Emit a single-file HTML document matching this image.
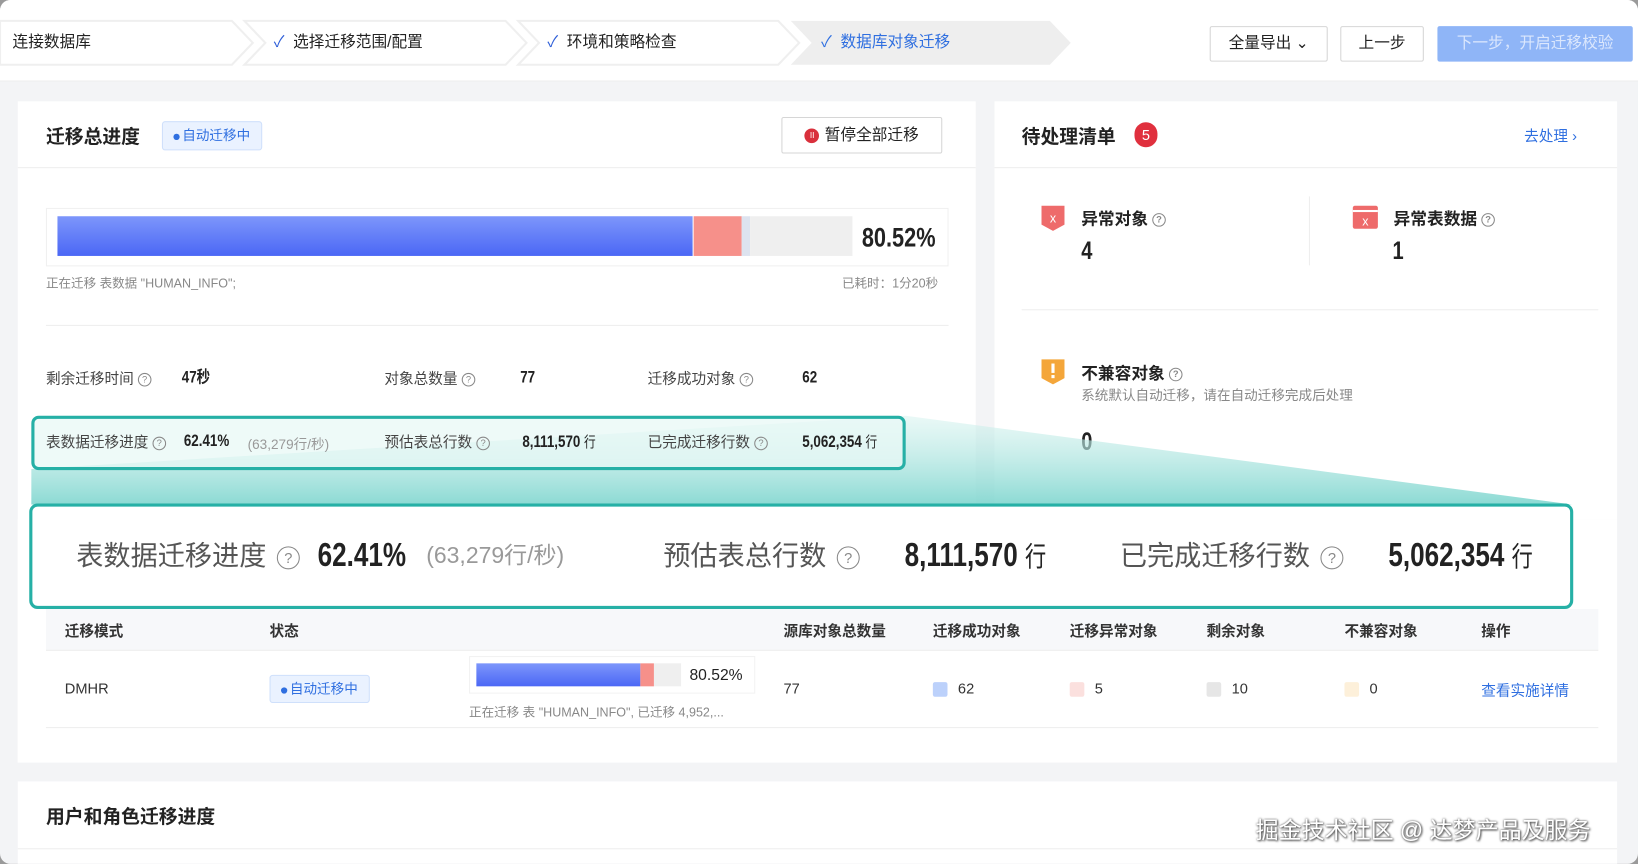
<!DOCTYPE html>
<html><head><meta charset="utf-8"><style>
*{margin:0;padding:0;box-sizing:border-box}
body{width:1638px;height:864px;overflow:hidden;background:#9a9a9a;font-family:"Liberation Sans","Noto Sans CJK SC",sans-serif;color:#222}
#w{position:absolute;left:0;top:0;width:1568px;height:827px;transform:scale(1.04464);transform-origin:0 0;background:#f3f4f6;border-radius:10px;overflow:hidden}
.a{position:absolute}
.top{left:0;top:0;width:1568px;height:78px;background:#fff;border-bottom:1px solid #eee}
.step{top:20px;height:42px;font-size:15px;line-height:42px;color:#222}
.card{background:#fff}
.btn{border:1px solid #d6d6d6;background:#fff;font-size:15px;text-align:center;line-height:31px;border-radius:2px}
.q{display:inline-block;width:13px;height:13px;border:1px solid #888;border-radius:50%;font-size:9px;line-height:11px;text-align:center;color:#888;vertical-align:middle;margin-left:4px}
.lbl{font-size:14px;color:#444;line-height:20px}
.num{font-weight:bold;font-size:16px;color:#222;line-height:20px;transform:scaleX(.8);transform-origin:0 50%;white-space:nowrap}
.tag{background:#eaf2ff;border:1px solid #cfe0fb;color:#2f6fe0;font-size:13px;border-radius:3px;text-align:center}
.dot{display:inline-block;width:6px;height:6px;border-radius:50%;background:#2f6fe0;vertical-align:middle;margin-right:2px}
.th{font-size:14px;font-weight:bold;color:#333;top:594px}
.td{font-size:14px;color:#333;top:651px}
.sq{display:inline-block;width:14px;height:14px;border-radius:2px;vertical-align:middle;margin-right:10px}
.big{font-size:26px;color:#555;line-height:36px;top:514px}
.bq{width:22px;height:22px;font-size:14px;line-height:20px;margin-left:10px}
.bn{font-size:32px;line-height:36px;top:513px;transform:scaleX(.78)}
</style></head><body><div id="w">
<div class="a top"></div>
<svg class="a" style="left:0;top:18px" width="1040" height="46">
<g fill="#fff" stroke="#efefef" stroke-width="2">
<polygon points="0,2 222,2 242,23 222,44 0,44"/>
<polygon points="234,2 484,2 504,23 484,44 234,44 254,23"/>
<polygon points="496,2 745,2 765,23 745,44 496,44 516,23"/>
</g>
<polygon points="757,2 1005,2 1025,23 1005,44 757,44 777,23" fill="#eeeeee"/>
</svg>
<div class="a step" style="left:12px">连接数据库</div>
<div class="a step" style="left:262px"><span style="color:#2f5fd8">✓</span>&nbsp; 选择迁移范围/配置</div>
<div class="a step" style="left:524px"><span style="color:#2f5fd8">✓</span>&nbsp; 环境和策略检查</div>
<div class="a step" style="left:786px;color:#2f6fe0"><span>✓</span>&nbsp; 数据库对象迁移</div>
<div class="a btn" style="left:1158px;top:25px;width:113px;height:34px">全量导出 ⌄</div>
<div class="a btn" style="left:1283px;top:25px;width:80px;height:34px">上一步</div>
<div class="a btn" style="left:1376px;top:25px;width:187px;height:34px;background:#8fb5f7;border-color:#8fb5f7;color:#dbe7fd">下一步，开启迁移校验</div>

<!-- left card -->
<div class="a card" style="left:17px;top:97px;width:917px;height:633px"></div>
<div class="a card" style="left:17px;top:497px;width:1531px;height:233px"></div>
<div class="a" style="left:17px;top:160px;width:917px;height:1px;background:#eee"></div>
<div class="a" style="left:44px;top:117px;font-size:18px;font-weight:bold">迁移总进度</div>
<div class="a tag" style="left:155px;top:116px;width:96px;height:28px;line-height:26px"><span class="dot"></span>自动迁移中</div>
<div class="a btn" style="left:748px;top:112px;width:154px;height:35px;display:flex;align-items:center;justify-content:center;gap:5px"><span style="display:inline-block;width:14px;height:14px;border-radius:50%;background:#d9303c;color:#fff;font-size:8px;line-height:14px">II</span>暂停全部迁移</div>
<div class="a" style="left:44px;top:199px;width:864px;height:56px;border:1px solid #f0f0f0"></div>
<div class="a" style="left:55px;top:207px;width:608px;height:38px;background:linear-gradient(#7d96fb,#4b67f5)"></div>
<div class="a" style="left:664px;top:207px;width:46px;height:38px;background:#f6908a"></div>
<div class="a" style="left:710px;top:207px;width:8px;height:38px;background:#dde3ef"></div>
<div class="a" style="left:718px;top:207px;width:98px;height:38px;background:#efefef"></div>
<div class="a num" style="left:825px;top:214px;font-size:26px;line-height:26px">80.52%</div>
<div class="a" style="left:44px;top:262px;font-size:12px;color:#888">正在迁移 表数据 "HUMAN_INFO";</div>
<div class="a" style="left:806px;top:262px;font-size:12px;color:#888">已耗时：1分20秒</div>
<div class="a" style="left:44px;top:311px;width:864px;height:1px;background:#eee"></div>
<div class="a lbl" style="left:44px;top:352px">剩余迁移时间<span class="q">?</span></div><div class="a num" style="left:174px;top:352px">47秒</div>
<div class="a lbl" style="left:368px;top:352px">对象总数量<span class="q">?</span></div><div class="a num" style="left:498px;top:352px">77</div>
<div class="a lbl" style="left:620px;top:352px">迁移成功对象<span class="q">?</span></div><div class="a num" style="left:768px;top:352px">62</div>

<!-- right card -->
<div class="a card" style="left:952px;top:97px;width:596px;height:400px"></div>
<div class="a" style="left:952px;top:160px;width:596px;height:1px;background:#eee"></div>
<div class="a" style="left:978px;top:117px;font-size:18px;font-weight:bold">待处理清单</div>
<div class="a" style="left:1086px;top:117px;width:22px;height:24px;border-radius:11px;background:#e0303e;color:#fff;font-size:14px;text-align:center;line-height:24px">5</div>
<div class="a" style="left:1459px;top:120px;font-size:14px;color:#2f6fe0">去处理 ›</div>
<svg class="a" style="left:996px;top:196px" width="26" height="26"><path d="M1 1h22v18l-11 6-11-6z" fill="#ee6b6b"/><text x="12" y="17" font-size="12" fill="#fff" text-anchor="middle" font-family="Liberation Sans">x</text></svg>
<div class="a" style="left:1035px;top:196px;font-size:16px;font-weight:bold">异常对象<span class="q">?</span></div>
<div class="a num" style="left:1035px;top:229px;font-size:24px;line-height:24px">4</div>
<div class="a" style="left:1253px;top:188px;width:1px;height:66px;background:#eee"></div>
<svg class="a" style="left:1294px;top:196px" width="26" height="26"><rect x="1" y="1" width="24" height="22" rx="2" fill="#ee6b6b"/><rect x="1" y="5" width="24" height="2" fill="#fff"/><text x="13" y="20" font-size="12" fill="#fff" text-anchor="middle" font-family="Liberation Sans">x</text></svg>
<div class="a" style="left:1334px;top:196px;font-size:16px;font-weight:bold">异常表数据<span class="q">?</span></div>
<div class="a num" style="left:1333px;top:229px;font-size:24px;line-height:24px">1</div>
<div class="a" style="left:978px;top:296px;width:552px;height:1px;background:#eee"></div>
<svg class="a" style="left:996px;top:343px" width="26" height="28"><path d="M1 1h22v18l-11 6-11-6z" fill="#f4a63a"/><rect x="10.5" y="5" width="3" height="9" fill="#fff"/><rect x="10.5" y="16" width="3" height="3" fill="#fff"/></svg>
<div class="a" style="left:1035px;top:344px;font-size:16px;font-weight:bold">不兼容对象<span class="q">?</span></div>
<div class="a" style="left:1035px;top:368px;font-size:13px;color:#888">系统默认自动迁移，请在自动迁移完成后处理</div>
<div class="a num" style="left:1035px;top:412px;font-size:24px;line-height:24px">0</div>

<!-- table -->
<div class="a" style="left:44px;top:583px;width:1486px;height:40px;background:#f7f8fa;border-bottom:1px solid #eee"></div>
<div class="a" style="left:44px;top:696px;width:1486px;height:1px;background:#eee"></div>
<div class="a th" style="left:62px">迁移模式</div><div class="a th" style="left:258px">状态</div><div class="a th" style="left:750px">源库对象总数量</div><div class="a th" style="left:893px">迁移成功对象</div><div class="a th" style="left:1024px">迁移异常对象</div><div class="a th" style="left:1155px">剩余对象</div><div class="a th" style="left:1287px">不兼容对象</div><div class="a th" style="left:1418px">操作</div>
<div class="a td" style="left:62px">DMHR</div>
<div class="a tag" style="left:258px;top:646px;width:96px;height:27px;line-height:25px"><span class="dot"></span>自动迁移中</div>
<div class="a" style="left:449px;top:628px;width:274px;height:36px;border:1px solid #f2f2f2"></div>
<div class="a" style="left:456px;top:635px;width:157px;height:22px;background:linear-gradient(#7d96fb,#4b67f5)"></div>
<div class="a" style="left:613px;top:635px;width:13px;height:22px;background:#f6908a"></div>
<div class="a" style="left:626px;top:635px;width:26px;height:22px;background:#efefef"></div>
<div class="a" style="left:660px;top:638px;font-size:15px">80.52%</div>
<div class="a" style="left:449px;top:673px;font-size:12px;color:#888">正在迁移 表 "HUMAN_INFO", 已迁移 4,952,...</div>
<div class="a td" style="left:750px">77</div>
<div class="a td" style="left:893px"><span class="sq" style="background:#bcd1fb"></span>62</div>
<div class="a td" style="left:1024px"><span class="sq" style="background:#fbe0de"></span>5</div>
<div class="a td" style="left:1155px"><span class="sq" style="background:#e6e6e6"></span>10</div>
<div class="a td" style="left:1287px"><span class="sq" style="background:#fdf0da"></span>0</div>
<div class="a td" style="left:1418px;color:#2f6fe0">查看实施详情</div>

<div class="a card" style="left:17px;top:748px;width:1531px;height:79px"></div>
<div class="a" style="left:44px;top:768px;font-size:18px;font-weight:bold">用户和角色迁移进度</div>
<div class="a" style="left:17px;top:812px;width:1531px;height:1px;background:#eee"></div>

<!-- overlay -->
<svg class="a" style="left:0;top:0" width="1568" height="827"><defs><linearGradient id="g" x1="0" y1="0" x2="0" y2="1"><stop offset="0" stop-color="#d4f2ee" stop-opacity=".5"/><stop offset="1" stop-color="#7fd6cf" stop-opacity=".9"/></linearGradient></defs>
<polygon points="30,449 867,398 1505,483 30,483" fill="url(#g)"/></svg>
<div class="a" style="left:30px;top:398px;width:837px;height:52px;border:3px solid #26b0a6;border-radius:7px;background:rgba(232,248,246,.75)"></div>
<div class="a lbl" style="left:44px;top:413px">表数据迁移进度<span class="q">?</span></div><div class="a num" style="left:176px;top:413px">62.41%</div><div class="a" style="left:237px;top:415px;font-size:13px;color:#999">(63,279行/秒)</div>
<div class="a lbl" style="left:368px;top:413px">预估表总行数<span class="q">?</span></div><div class="a num" style="left:500px;top:413px">8,111,570 <span style="font-weight:normal;font-size:14px">行</span></div>
<div class="a lbl" style="left:620px;top:413px">已完成迁移行数<span class="q">?</span></div><div class="a num" style="left:768px;top:413px">5,062,354 <span style="font-weight:normal;font-size:14px">行</span></div>
<div class="a" style="left:28px;top:482px;width:1478px;height:101px;border:3px solid #26b0a6;border-radius:8px;background:#fff"></div>
<div class="a big" style="left:73px">表数据迁移进度<span class="q bq">?</span></div>
<div class="a num bn" style="left:304px">62.41%</div>
<div class="a" style="left:408px;top:517px;font-size:22px;color:#999;line-height:30px">(63,279行/秒)</div>
<div class="a big" style="left:635px">预估表总行数<span class="q bq">?</span></div>
<div class="a num bn" style="left:866px">8,111,570 <span style="font-weight:normal;font-size:26px">行</span></div>
<div class="a big" style="left:1072px">已完成迁移行数<span class="q bq">?</span></div>
<div class="a num bn" style="left:1329px">5,062,354 <span style="font-weight:normal;font-size:26px">行</span></div>

<div class="a" style="left:1202px;top:777px;font-size:22px;color:#fff;text-shadow:0 0 2px #555,1px 1px 2px #444">掘金技术社区 @ 达梦产品及服务</div>
</div></body></html>
